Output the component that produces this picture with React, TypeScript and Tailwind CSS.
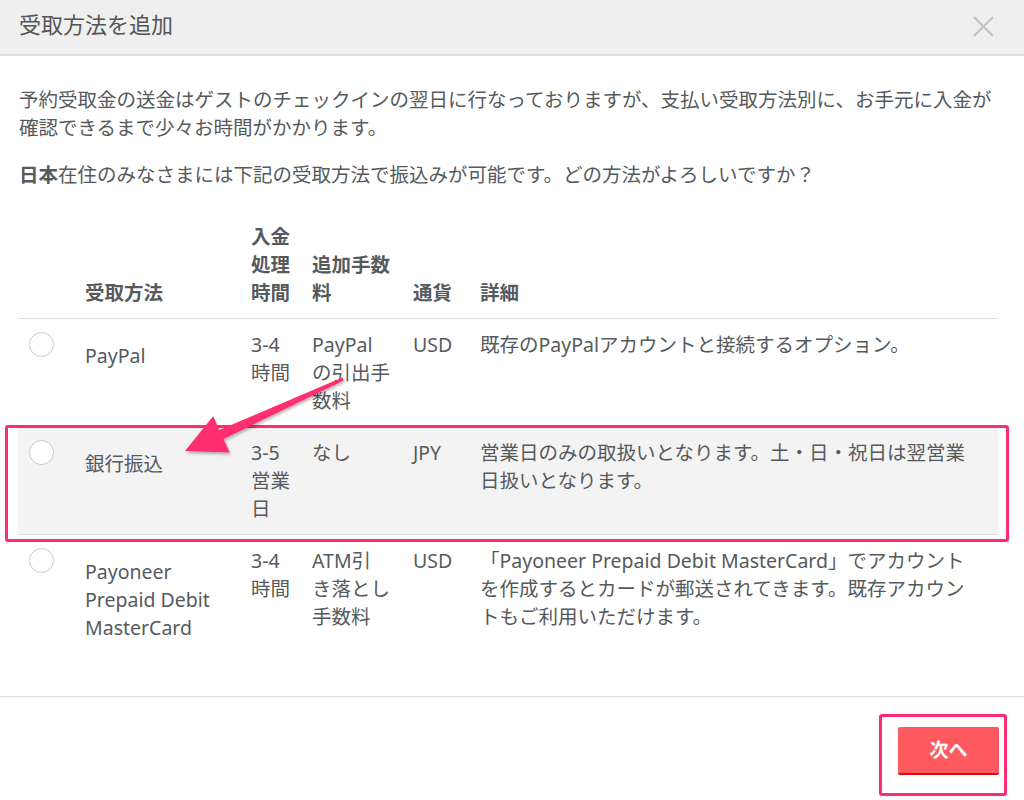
import React from "react";

const Radio = () => (
  <div className="w-[25px] h-[25px] rounded-full border border-[#c9c9c9] bg-white ml-[11px]" />
);

const Lines = ({ lines }: { lines: string[] }) => (
  <div className="whitespace-nowrap">
    {lines.map((l, i) => (
      <div key={i}>{l}</div>
    ))}
  </div>
);

type Row = {
  name: string[];
  time: string[];
  fee: string[];
  cur: string;
  detail: string[];
  highlight?: boolean;
  border?: boolean;
};

const rows: Row[] = [
  {
    name: ["PayPal"],
    time: ["3-4", "時間"],
    fee: ["PayPal", "の引出手", "数料"],
    cur: "USD",
    detail: ["既存のPayPalアカウントと接続するオプション。"],
    border: true,
  },
  {
    name: ["銀行振込"],
    time: ["3-5", "営業", "日"],
    fee: ["なし"],
    cur: "JPY",
    detail: ["営業日のみの取扱いとなります。土・日・祝日は翌営業", "日扱いとなります。"],
    highlight: true,
    border: true,
  },
  {
    name: ["Payoneer", "Prepaid Debit", "MasterCard"],
    time: ["3-4", "時間"],
    fee: ["ATM引", "き落とし", "手数料"],
    cur: "USD",
    detail: [
      "「Payoneer Prepaid Debit MasterCard」でアカウント",
      "を作成するとカードが郵送されてきます。既存アカウン",
      "トもご利用いただけます。",
    ],
  },
];

export default function App() {
  return (
    <div
      className="relative w-[1024px] h-[800px] overflow-hidden bg-white text-[#565a5c]"
      style={{ fontFamily: '"Noto Sans", "Noto Sans CJK JP", sans-serif' }}
    >
      {/* header */}
      <div className="h-[56px] bg-[#eeefee] border-b-2 border-[#dcdedd] flex items-start justify-between pl-[19px] pr-[30px]">
        <div className="mt-[10px] text-[22px] leading-[28px] text-[#555]">受取方法を追加</div>
        <svg width="21" height="21" viewBox="0 0 21 21" className="mt-[16px]">
          <path d="M1 1 L20 20 M20 1 L1 20" stroke="#c2c2c2" strokeWidth="2" />
        </svg>
      </div>

      {/* body */}
      <div className="pl-[18px] pr-[26px] text-[19.5px] leading-[28px]">
        <p className="mt-[30px] pl-[1px]">
          予約受取金の送金はゲストのチェックインの翌日に行なっておりますが、支払い受取方法別に、お手元に入金が
          <br />
          確認できるまで少々お時間がかかります。
        </p>
        <p className="mt-[19px] pl-[1px]">
          <span className="font-bold">日本</span>在住のみなさまには下記の受取方法で振込みが可能です。どの方法がよろしいですか？
        </p>

        <div className="mt-[34px]">
          <div className="grid grid-cols-[67px_166px_61px_101px_67px_1fr] items-end pb-[11px] border-b border-[#dcdcdc] font-bold">
            <div />
            <div>受取方法</div>
            <Lines lines={["入金", "処理", "時間"]} />
            <Lines lines={["追加手数", "料"]} />
            <div>通貨</div>
            <div>詳細</div>
          </div>
          {rows.map((r, i) => (
            <div
              key={i}
              className={`grid grid-cols-[67px_166px_61px_101px_67px_1fr] items-start pt-[12px] pb-[11px] ${
                r.border ? "border-b border-[#dcdcdc]" : ""
              } ${r.highlight ? "bg-[#f3f3f3]" : ""}`}
            >
              <div className="pt-[1px]">
                <Radio />
              </div>
              <div className="pt-[11px]">
                <Lines lines={r.name} />
              </div>
              <Lines lines={r.time} />
              <Lines lines={r.fee} />
              <div>{r.cur}</div>
              <Lines lines={r.detail} />
            </div>
          ))}
        </div>
      </div>

      {/* footer */}
      <div className="mt-[43px] border-t border-[#dcdcdc] pt-[30px] pr-[25px] flex justify-end">
        <button className="w-[101px] h-[48px] rounded-[2px] bg-[#ff5a5f] border-b-2 border-[#e0070f] text-white text-[19px] font-bold leading-[28px]">
          次へ
        </button>
      </div>

      {/* annotations */}
      <div className="absolute left-[5px] top-[425px] w-[1004px] h-[117px] border-[3px] border-[#ff2d6f] rounded-[3px] pointer-events-none" />
      <div className="absolute left-[879px] top-[714px] w-[128px] h-[82px] border-[3px] border-[#ff2d6f] rounded-[3px] pointer-events-none" />
      <svg className="absolute left-0 top-0 pointer-events-none" width="1024" height="800" viewBox="0 0 1024 800">
        <defs>
          <filter id="sh" x="-20%" y="-20%" width="140%" height="140%">
            <feDropShadow dx="1" dy="2" stdDeviation="1.5" floodColor="#000" floodOpacity="0.3" />
          </filter>
        </defs>
        <polygon
          filter="url(#sh)"
          fill="#ff2d6f"
          points="343.6,380.4 342.4,377.6 219.3,429.9 213.1,416.2 185,451 229.7,452.6 223.5,439"
        />
      </svg>
    </div>
  );
}
